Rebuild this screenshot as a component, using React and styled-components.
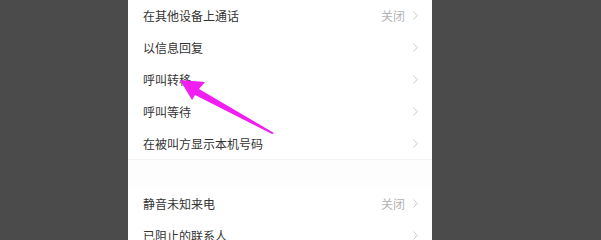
import React from 'react';
import styled, { createGlobalStyle } from 'styled-components';

const GlobalStyle = createGlobalStyle`
  html, body {
    margin: 0;
    padding: 0;
    background: #4b4b4b;
    overflow: hidden;
  }
  body {
    font-family: "Noto Sans CJK SC", "Noto Sans", sans-serif;
  }
`;

const Stage = styled.div`
  position: relative;
  width: 601px;
  height: 240px;
  overflow: hidden;
`;

const Panel = styled.div`
  width: 304px;
  margin-left: 128px;
  margin-top: -1px;
  background: #ffffff;
  display: flex;
  flex-direction: column;
`;

const Group = styled.div`
  display: flex;
  flex-direction: column;
  background: #ffffff;
`;

const Spacer = styled.div`
  height: 27px;
  border-top: 1px solid #f3f3f3;
  background: #fdfdfd;
`;

const Row = styled.div`
  height: 32px;
  display: flex;
  align-items: center;
  padding: 0 14px 0 15px;
`;

const Label = styled.span`
  flex: 1;
  font-size: 12px;
  color: #333333;
  letter-spacing: 0;
`;

const Value = styled.span`
  font-size: 12px;
  color: #b3b3b3;
  margin-right: 8px;
`;

const Chevron = () => (
  <svg width="5" height="9" viewBox="0 0 5 9">
    <path d="M0.6 0.6 L4.2 4.5 L0.6 8.4" fill="none" stroke="#c4c4c4" strokeWidth="0.9" />
  </svg>
);

const Arrow = styled.svg`
  position: absolute;
  left: 0;
  top: 0;
  pointer-events: none;
`;

const topItems = [
  { label: '在其他设备上通话', value: '关闭' },
  { label: '以信息回复' },
  { label: '呼叫转移' },
  { label: '呼叫等待' },
  { label: '在被叫方显示本机号码' },
];

const bottomItems = [
  { label: '静音未知来电', value: '关闭' },
  { label: '已阻止的联系人' },
];

function Item({ label, value }) {
  return (
    <Row>
      <Label>{label}</Label>
      {value && <Value>{value}</Value>}
      <Chevron />
    </Row>
  );
}

export default function App() {
  return (
    <Stage>
      <GlobalStyle />
      <Panel>
        <Group>
          {topItems.map((it) => (
            <Item key={it.label} {...it} />
          ))}
        </Group>
        <Spacer />
        <Group>
          {bottomItems.map((it) => (
            <Item key={it.label} {...it} />
          ))}
        </Group>
      </Panel>
      <Arrow width="601" height="240" viewBox="0 0 601 240">
        <path
          d="M180 80 L205 82 L199 89 L274 133 L272 134 L195 95 L192 100 Z"
          fill="#f01ef0"
        />
      </Arrow>
    </Stage>
  );
}
